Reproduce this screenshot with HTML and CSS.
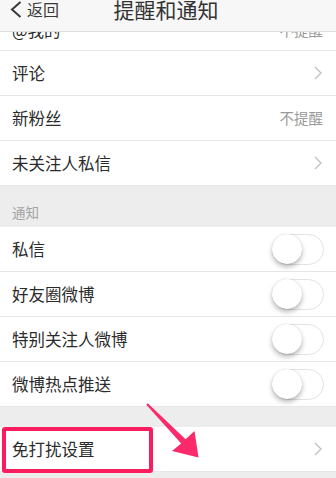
FILE: index.html
```html
<!DOCTYPE html>
<html lang="zh">
<head>
<meta charset="utf-8">
<title>提醒和通知</title>
<link rel="stylesheet" href="styles.css">
</head>
<body>
<div class="screen">
  <div class="list">
    <div class="group">
      <div class="row row-cut"><span class="label">@我的</span><span class="value">不提醒</span></div>
      <div class="row"><span class="label">评论</span><svg class="chev" viewBox="0 0 8 14"><path d="M1 1l6 6-6 6"/></svg></div>
      <div class="row"><span class="label">新粉丝</span><span class="value">不提醒</span></div>
      <div class="row"><span class="label">未关注人私信</span><svg class="chev" viewBox="0 0 8 14"><path d="M1 1l6 6-6 6"/></svg></div>
    </div>
    <div class="section-title">通知</div>
    <div class="group">
      <div class="row"><span class="label">私信</span><span class="switch"><span class="knob"></span></span></div>
      <div class="row"><span class="label">好友圈微博</span><span class="switch"><span class="knob"></span></span></div>
      <div class="row"><span class="label">特别关注人微博</span><span class="switch"><span class="knob"></span></span></div>
      <div class="row"><span class="label">微博热点推送</span><span class="switch"><span class="knob"></span></span></div>
    </div>
    <div class="gap"></div>
    <div class="group">
      <div class="row"><span class="label">免打扰设置</span><svg class="chev" viewBox="0 0 8 14"><path d="M1 1l6 6-6 6"/></svg></div>
    </div>
  </div>

  <div class="header">
    <div class="back">
      <svg class="back-chev" viewBox="0 0 12 17"><path d="M10.5 1L2 8.5 10.5 16"/></svg>
      <span>返回</span>
    </div>
    <div class="title">提醒和通知</div>
  </div>

  <div class="highlight"></div>
  <svg class="arrow" viewBox="0 0 336 478">
    <polygon points="146.3,404.7 147.7,403.3 185.6,439.3 194.5,431 198.5,457.5 172,451 181.2,443.4"/>
  </svg>
</div>
</body>
</html>
```

FILE: styles.css
```css
html, body {
  margin: 0;
  padding: 0;
}
body {
  width: 336px;
  height: 478px;
  overflow: hidden;
  background: #ededed;
  font-family: "Noto Sans CJK SC", "Noto Sans", sans-serif;
}
.screen {
  position: relative;
  width: 336px;
  height: 478px;
  overflow: hidden;
}
.list {
  padding-top: 6px;
}
.group {
  background: #ffffff;
}
.row {
  height: 44px;
  border-bottom: 1px solid #e6e6e6;
  display: flex;
  align-items: center;
  justify-content: space-between;
  padding: 0 12px 0 12px;
}
.row-cut {
  align-items: flex-start;
  padding-top: 14px;
  height: 30px;
}
.label {
  font-size: 16.5px;
  color: #2b2b2b;
  line-height: 20px;
}
.value {
  font-size: 14.5px;
  color: #9a9a9a;
  line-height: 20px;
  margin-right: 1px;
}
.chev {
  width: 8px;
  height: 14px;
  margin-right: 2px;
  fill: none;
  stroke: #bdbdbd;
  stroke-width: 1.2;
}
.section-title {
  height: 41px;
  box-sizing: border-box;
  display: flex;
  align-items: flex-end;
  padding: 0 12px 5px;
  font-size: 13.5px;
  line-height: 20px;
  color: #a3a3a3;
}
.switch {
  position: relative;
  width: 52px;
  height: 31px;
  box-sizing: border-box;
  border: 1.5px solid #e3e3e3;
  border-radius: 16px;
  background: #ffffff;
}
.knob {
  position: absolute;
  left: -1px;
  top: -1px;
  width: 30px;
  height: 30px;
  border-radius: 50%;
  background: #ffffff;
  box-shadow: 0 3px 5px rgba(0, 0, 0, 0.28), 0 0 1px rgba(0, 0, 0, 0.2);
}
.gap {
  height: 20px;
}
.header {
  position: absolute;
  top: 0;
  left: 0;
  width: 336px;
  height: 32px;
  box-sizing: border-box;
  background: #f7f7f7;
  border-bottom: 1px solid #dedede;
  display: flex;
  align-items: flex-start;
}
.back {
  display: flex;
  align-items: center;
  height: 18px;
  padding-left: 10px;
  font-size: 16px;
  color: #3a3a3a;
}
.back-chev {
  width: 12px;
  height: 17px;
  margin-right: 5px;
  fill: none;
  stroke: #3a3a3a;
  stroke-width: 2;
}
.title {
  position: absolute;
  left: 50%;
  top: 0;
  transform: translateX(-50%);
  margin-left: -2px;
  height: 18px;
  line-height: 18px;
  white-space: nowrap;
  font-size: 21px;
  color: #333333;
}
.highlight {
  position: absolute;
  left: 2px;
  top: 427px;
  width: 151px;
  height: 46px;
  box-sizing: border-box;
  border: 4px solid #fb1c60;
  border-radius: 3px;
}
.arrow {
  position: absolute;
  left: 0;
  top: 0;
  width: 336px;
  height: 478px;
  fill: #fb2a6a;
}
```
